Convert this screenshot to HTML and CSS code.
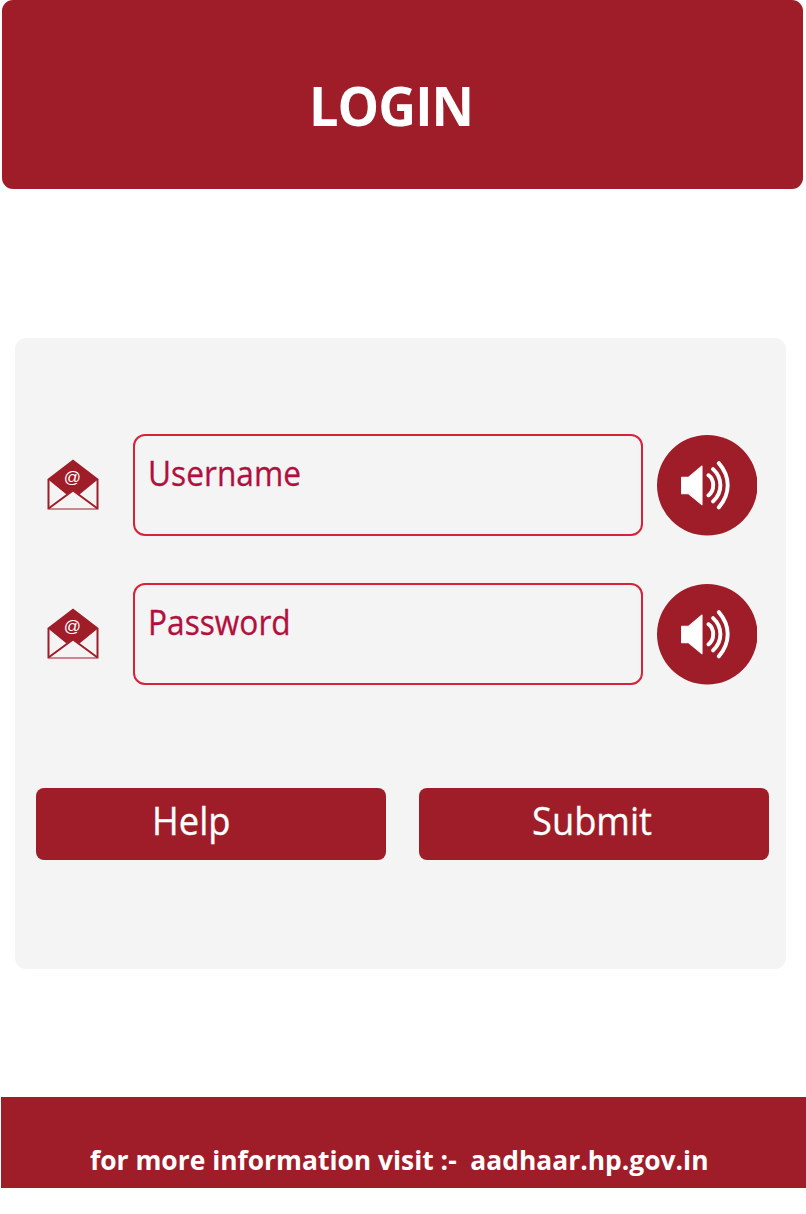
FILE: index.html
```html
<!DOCTYPE html>
<html lang="en">
<head>
<meta charset="utf-8">
<title>Login</title>
<link rel="stylesheet" href="styles.css">
</head>
<body>
<header class="header"><h1 class="title">LOGIN</h1></header>
<main class="panel">
  <div class="row">
    <svg class="mail" viewBox="0 0 52 52">
      <path class="mail-body" d="M1.500 20V49.500H50.500V20"/>
      <path class="mail-flap" d="M0.500 20 26 0.500 51.500 20 32.500 35.500 26 31 19.500 35.500Z"/>
      <path class="mail-fold" d="M1.500 49.500 26 31.500 50.500 49.500"/>
      <text class="mail-at" x="25.500" y="24">@</text>
    </svg>
    <div class="field"><span class="label">Username</span></div>
    <svg class="sound" viewBox="0 0 100 100">
      <circle class="disc" cx="50" cy="50" r="50"/>
      <path class="horn" d="M24.500 42H31.500L44.800 30.800V69.500L31.500 58.500H24.500Z"/>
      <path class="wave" d="M51.200 40C57.500 44.500 57.500 55.500 51.200 60M55.800 34C65.500 43 65.500 57 55.800 66M61.500 28C73.300 41.500 73.300 58.500 61.500 72"/>
    </svg>
  </div>
  <div class="row">
    <svg class="mail" viewBox="0 0 52 52">
      <path class="mail-body" d="M1.500 20V49.500H50.500V20"/>
      <path class="mail-flap" d="M0.500 20 26 0.500 51.500 20 32.500 35.500 26 31 19.500 35.500Z"/>
      <path class="mail-fold" d="M1.500 49.500 26 31.500 50.500 49.500"/>
      <text class="mail-at" x="25.500" y="24">@</text>
    </svg>
    <div class="field"><span class="label">Password</span></div>
    <svg class="sound" viewBox="0 0 100 100">
      <circle class="disc" cx="50" cy="50" r="50"/>
      <path class="horn" d="M24.500 42H31.500L44.800 30.800V69.500L31.500 58.500H24.500Z"/>
      <path class="wave" d="M51.200 40C57.500 44.500 57.500 55.500 51.200 60M55.800 34C65.500 43 65.500 57 55.800 66M61.500 28C73.300 41.500 73.300 58.500 61.500 72"/>
    </svg>
  </div>
  <div class="actions">
    <button class="button help"><span class="caption">Help</span></button>
    <button class="button submit"><span class="caption">Submit</span></button>
  </div>
</main>
<footer class="footer"><span class="note">for more information visit :-&nbsp; aadhaar.hp.gov.in</span></footer>
</body>
</html>
```
FILE: styles.css
```css
* { box-sizing: border-box; }
body {
  margin: 0;
  height: 1214px;
  background: #fff;
  font-family: "Open Sans", "Noto Sans", sans-serif;
  overflow: hidden;
}
.header {
  width: 800.5px;
  height: 188.5px;
  margin-left: 2px;
  padding-left: 307px;
  border-radius: 11px;
  background: #9f1d28;
}
.title {
  display: inline-block;
  margin: 0;
  color: #fff;
  font-size: 54.5px;
  font-weight: 700;
  line-height: 211px;
  letter-spacing: -1px;
  transform: scaleX(.96);
  transform-origin: left;
}
.panel {
  width: 771px;
  height: 631.5px;
  margin: 149px 0 0 14.5px;
  padding: 96.5px 15px 0 21.5px;
  border-radius: 11px;
  background: #f4f4f4;
}
.row {
  display: flex;
  height: 102px;
  margin-bottom: 47.3px;
}
.mail { width: 52px; height: 52px; margin: 25px 34px 0 10.6px; flex: none; }
.mail-body, .mail-fold { fill: none; stroke: #9f1d28; stroke-width: 2; }
.mail-fold { fill: #f4f4f4; }
.mail-flap { fill: #9f1d28; }
.mail-at { fill: #fff; font: 17px "Liberation Sans", sans-serif; text-anchor: middle; }
.field {
  width: 510px;
  height: 102px;
  padding-left: 13.6px;
  border: 2px solid #d6233a;
  border-radius: 12px;
}
.label {
  display: inline-block;
  color: #b30f3e;
  font-size: 33.8px;
  line-height: 74px;
  -webkit-text-stroke: .3px;
  transform: scaleX(.937);
  transform-origin: left;
}
.sound { width: 100.5px; height: 100.5px; margin: 1px 0 0 14.2px; flex: none; }
.disc { fill: #9f1d28; }
.horn { fill: #fff; stroke: #fff; stroke-width: 1; stroke-linejoin: round; }
.wave { fill: none; stroke: #fff; stroke-width: 3.9; stroke-linecap: round; }
.actions { display: flex; gap: 32.5px; margin-top: 102.3px; }
.button {
  flex: none;
  width: 350.4px;
  height: 72.5px;
  padding: 0;
  border: 0;
  border-radius: 8px;
  background: #9f1d28;
  color: #fff;
  font: 38px "Open Sans", sans-serif;
  text-align: left;
}
.help { padding-left: 116px; }
.submit { padding-left: 113.5px; }
.caption {
  display: block;
  line-height: 64px;
  height: 72.5px;
  width: max-content;
  -webkit-text-stroke: .3px;
  transform: scaleX(.955);
  transform-origin: left;
}
.footer {
  width: 805px;
  height: 91px;
  margin: 128px 0 0 .5px;
  padding-left: 89px;
  background: #9f1d28;
}
.note {
  display: inline-block;
  color: #fff;
  font-size: 27.5px;
  font-weight: 700;
  line-height: 125px;
  white-space: nowrap;
  transform: scaleX(.96);
  transform-origin: left;
}
```
